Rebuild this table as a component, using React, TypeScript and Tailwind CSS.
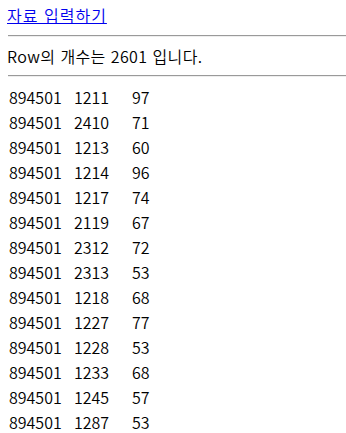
const rows: [string, string, string][] = [
  ["894501", "1211", "97"],
  ["894501", "2410", "71"],
  ["894501", "1213", "60"],
  ["894501", "1214", "96"],
  ["894501", "1217", "74"],
  ["894501", "2119", "67"],
  ["894501", "2312", "72"],
  ["894501", "2313", "53"],
  ["894501", "1218", "68"],
  ["894501", "1227", "77"],
  ["894501", "1228", "53"],
  ["894501", "1233", "68"],
  ["894501", "1245", "57"],
  ["894501", "1287", "53"],
];

const Divider = () => (
  <div className="h-0 border-t border-b border-t-[#9a9a9a] border-b-[#eeeeee]" />
);

const App = () => {
  return (
    <div className="h-screen overflow-hidden bg-white pl-2 text-[16px] text-black font-[350] font-['Noto_Sans_CJK_KR','Noto_Sans',sans-serif]">
      {/* link */}
      <div className="pt-[5px] leading-[20px] -ml-px">
        <a href="#" className="text-[#0000ee] underline tracking-[1px] [word-spacing:1px]">
          자료 입력하기
        </a>
      </div>
      <div className="mt-[10px]">
        <Divider />
      </div>

      {/* count */}
      <p className="mt-[9px] leading-[20px] -ml-px tracking-[0.4px] [word-spacing:1px]">
        Row의 개수는 2601 입니다.
      </p>
      <div className="mt-[9px]">
        <Divider />
      </div>

      {/* table */}
      <div className="mt-[8px] flex flex-col">
        {rows.map((r, i) => (
          <div key={i} className="grid grid-cols-[65px_58px_auto] h-[25px] leading-[25px] pl-px">
            <span>{r[0]}</span>
            <span>{r[1]}</span>
            <span>{r[2]}</span>
          </div>
        ))}
      </div>
    </div>
  );
};

export default App;
